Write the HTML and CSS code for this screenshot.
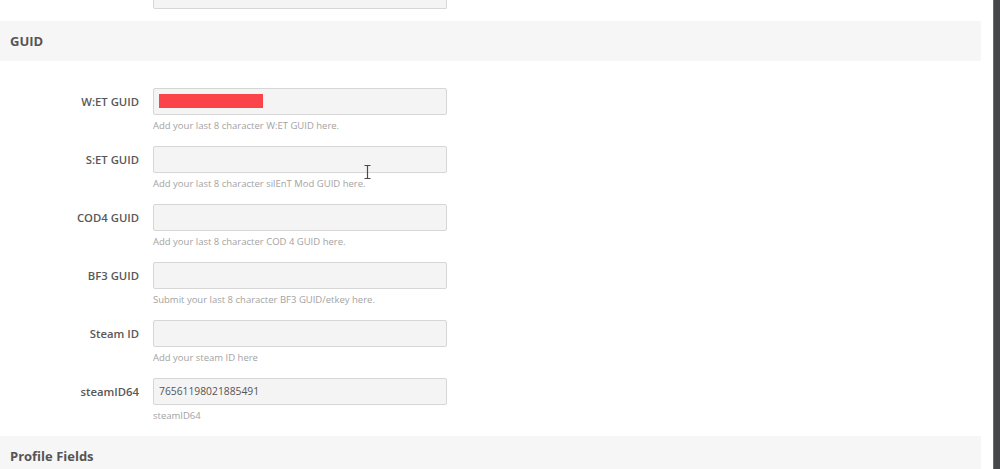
FILE: index.html
```html
<!DOCTYPE html>
<html lang="en">
<head>
  <meta charset="UTF-8">
  <meta name="viewport" content="width=device-width, initial-scale=1.0">
  <title>Edit Profile - GUID</title>
  <link rel="stylesheet" href="styles.css">
</head>
<body>

  <div class="page">
    <div class="main">

      <!-- tail of the field above the fold -->
      <div class="row-stub">
        <div class="field-stub"></div>
      </div>

      <div class="section-head">GUID</div>

      <div class="fields">
        <div class="row">
          <label class="label" for="wet">W:ET GUID</label>
          <div class="control">
            <div class="input" id="wet"><span class="redact"></span></div>
            <p class="help">Add your last 8 character W:ET GUID here.</p>
          </div>
        </div>

        <div class="row">
          <label class="label" for="set">S:ET GUID</label>
          <div class="control">
            <div class="input" id="set"></div>
            <p class="help">Add your last 8 character silEnT Mod GUID here.</p>
            <svg class="ibeam" width="7" height="14" viewBox="0 0 7 14">
              <path d="M0.5 0.5h6M0.5 13.5h6M3.5 0.5v13" stroke="#4a4a4a" stroke-width="1.2" fill="none"/>
            </svg>
          </div>
        </div>

        <div class="row">
          <label class="label" for="cod4">COD4 GUID</label>
          <div class="control">
            <div class="input" id="cod4"></div>
            <p class="help">Add your last 8 character COD 4 GUID here.</p>
          </div>
        </div>

        <div class="row">
          <label class="label" for="bf3">BF3 GUID</label>
          <div class="control">
            <div class="input" id="bf3"></div>
            <p class="help">Submit your last 8 character BF3 GUID/etkey here.</p>
          </div>
        </div>

        <div class="row">
          <label class="label" for="steam">Steam ID</label>
          <div class="control">
            <div class="input" id="steam"></div>
            <p class="help">Add your steam ID here</p>
          </div>
        </div>

        <div class="row">
          <label class="label" for="steam64">steamID64</label>
          <div class="control">
            <div class="input" id="steam64">76561198021885491</div>
            <p class="help">steamID64</p>
          </div>
        </div>
      </div>

      <div class="section-head">Profile Fields</div>

    </div>
    <div class="scrollbar"></div>
  </div>

</body>
</html>
```

FILE: styles.css
```css
body {
  font-family: "Open Sans", "Noto Sans", Arial, sans-serif;
  background-color: #fff;
  margin: 0;
  padding: 0;
  overflow: hidden;
}
.page {
  display: flex;
  height: 469px;
}
.main {
  flex: 1;
  padding-right: 12px;
}
.scrollbar {
  width: 6px;
  background-color: #46474b;
  border-left: 1px solid #6c6d71;
}
.row-stub {
  padding-left: 153px;
  height: 21px;
}
.field-stub {
  width: 292px;
  height: 8px;
  background-color: #f4f4f4;
  border: 1px solid #d6d6d6;
  border-top: none;
  border-radius: 0 0 2px 2px;
}
.section-head {
  background-color: #f6f6f6;
  height: 40px;
  line-height: 40px;
  padding-left: 10px;
  font-size: 13px;
  font-weight: 700;
  color: #555;
}
.fields {
  padding-top: 27px;
}
.row {
  display: flex;
  margin-bottom: 13px;
}
.label {
  width: 139px;
  flex: none;
  text-align: right;
  line-height: 27px;
  font-size: 11.3px;
  font-weight: 600;
  color: #585858;
  margin-right: 14px;
}
.control {
  position: relative;
  width: 294px;
}
.input {
  box-sizing: border-box;
  height: 27px;
  background-color: #f4f4f4;
  border: 1px solid #d6d6d6;
  border-radius: 2px;
  padding-left: 5px;
  line-height: 25px;
  font-size: 10.3px;
  color: #555;
}
.redact {
  display: inline-block;
  width: 104px;
  height: 14px;
  background-color: #fa4449;
  vertical-align: middle;
  margin-top: -2px;
}
.help {
  margin: 4px 0 0;
  line-height: 14px;
  font-size: 9.5px;
  color: #a3a3a3;
}
.ibeam {
  position: absolute;
  left: 211px;
  top: 19px;
}
```
